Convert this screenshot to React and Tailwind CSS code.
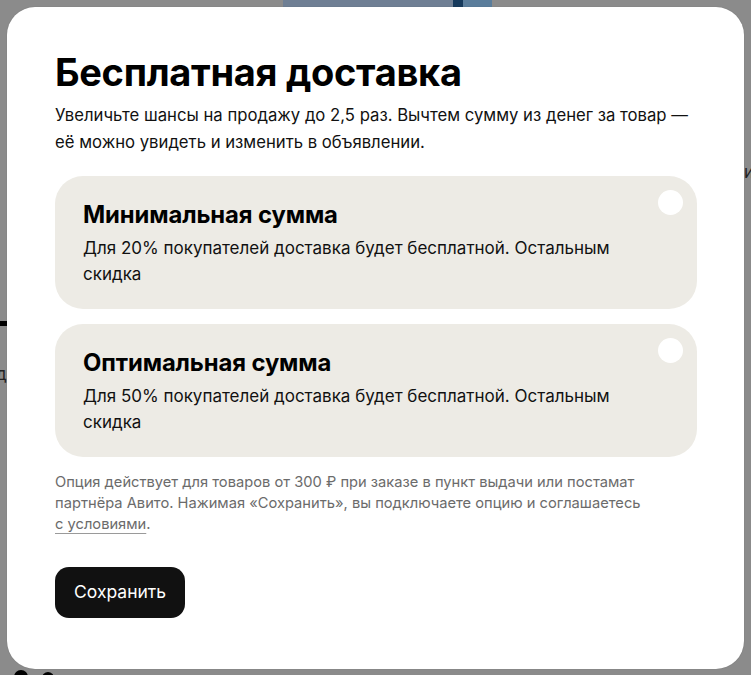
import React from "react";

function Option({ title, text }) {
  return (
    <div className="relative rounded-[28px] bg-[#edebe5] pl-[28px] pr-[60px] pt-[24px] pb-[22px]">
      <div className="text-[23.8px] leading-[30px] font-bold text-black tracking-[-0.1px]">{title}</div>
      <div className="mt-[5px] text-[17px] leading-[26px] text-[#111]">{text}</div>
      <div className="absolute right-[14px] top-[14px] h-[25px] w-[25px] rounded-full bg-white" />
    </div>
  );
}

export default function App() {
  return (
    <div
      className="relative flex h-[675px] w-[751px] overflow-hidden bg-[#8b8b8b] p-[7px] pb-[6px]"
      style={{ fontFamily: "Inter, 'Noto Sans', sans-serif" }}
    >
      {/* blurred page behind the overlay */}
      <div className="absolute left-[283px] top-0 flex h-[12px]">
        <div className="w-[170px] bg-[#6f7f94]" />
        <div className="w-[10px] bg-[#163a5c]" />
        <div className="w-[29px] bg-[#5a7d9b]" />
      </div>
      <div className="absolute left-0 top-[321px] h-[5px] w-[8px] bg-black" />
      <div className="absolute left-[-4px] top-[362px] text-[17px] text-[#222]">д</div>
      <div className="absolute left-[744px] top-[160px] text-[17px] text-[#222]">и</div>
      <div className="absolute left-[14px] top-[670px] flex items-start gap-[14px]">
        <div className="h-[14px] w-[14px] rounded-full bg-black" />
        <div className="mt-[2px] h-[12px] w-[12px] rounded-full bg-black" />
      </div>

      {/* modal */}
      <div className="relative flex flex-1 flex-col items-start rounded-[28px] bg-white pl-[48px] pr-[47px] pt-[43px] shadow-[0_0_1px_rgba(0,0,0,0.3)]">
        <h1 className="text-[38px] leading-[44px] font-bold text-black tracking-[-0.3px]">
          Бесплатная доставка
        </h1>
        <p className="mt-[8px] text-[16.7px] leading-[27px] text-[#111]">
          Увеличьте шансы на продажу до 2,5 раз. Вычтем сумму из денег за товар —
          <br />
          её можно увидеть и изменить в объявлении.
        </p>
        <div className="mt-[20px] flex w-full flex-col gap-[15px]">
          <Option
            title="Минимальная сумма"
            text="Для 20% покупателей доставка будет бесплатной. Остальным скидка"
          />
          <Option
            title="Оптимальная сумма"
            text="Для 50% покупателей доставка будет бесплатной. Остальным скидка"
          />
        </div>
        <p className="mt-[15px] pr-[20px] text-[14.7px] leading-[21px] text-[#6b6b6b]">
          Опция действует для товаров от 300 ₽ при заказе в пункт выдачи или постамат
          <br />
          партнёра Авито. Нажимая «Сохранить», вы подключаете опцию и соглашаетесь
          <br />
          <span className="underline decoration-[#9a9a9a] underline-offset-[4px]">с условиями</span>.
        </p>
        <button className="mt-[32px] h-[51px] rounded-[14px] bg-[#111] px-[19px] text-[17.5px] text-white">
          Сохранить
        </button>
      </div>
    </div>
  );
}
